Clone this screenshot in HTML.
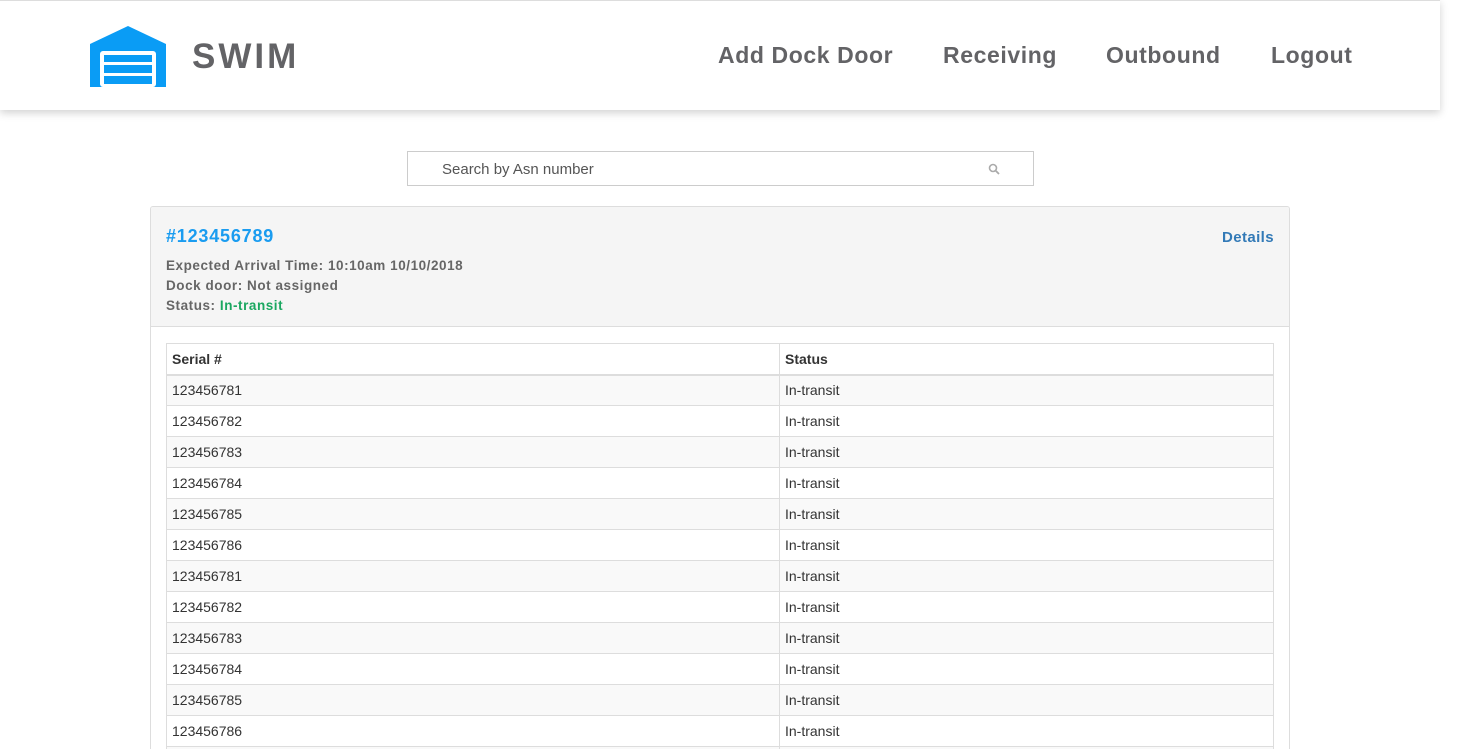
<!DOCTYPE html>
<html><head><style>
*{box-sizing:border-box;margin:0;padding:0}
html,body{width:1461px;height:749px;overflow:hidden}
body{background:#fff;font-family:"Liberation Sans",sans-serif;position:relative}
.hdr{position:absolute;left:0;top:0;width:1440px;height:110px;background:#fff;border-top:1px solid #ddd;box-shadow:0 3px 8px rgba(0,0,0,.18)}
.logo{position:absolute;left:90px;top:25px}
.brand{position:absolute;left:192px;top:36px;font-size:35px;font-weight:bold;color:#636366;letter-spacing:3px}
.nav{position:absolute;top:41px;font-size:23px;font-weight:bold;color:#636366;letter-spacing:0.6px}
.search{position:absolute;left:407px;top:151px;width:627px;height:35px;border:1px solid #ccc;font-size:15px;color:#555;padding:9px 34px}
.card{position:absolute;left:150px;top:206px;width:1140px;height:543px;border:1px solid #ddd;border-bottom:none;border-radius:3px 3px 0 0;overflow:hidden}
.ch{height:120px;background:#f5f5f5;border-bottom:1px solid #ddd;position:relative}
.asn{position:absolute;left:15px;top:19px;font-size:18px;font-weight:bold;color:#1a9cf0;letter-spacing:0.8px}
.det{position:absolute;right:15px;top:22px;font-size:15px;font-weight:bold;color:#337ab7;letter-spacing:0.4px}
.info{position:absolute;left:15px;top:49px;font-size:13.5px;font-weight:bold;color:#666;line-height:20px;letter-spacing:0.55px}
table{position:absolute;left:15px;top:136px;width:1108px;border-collapse:collapse;font-size:14px;color:#333}
td,th{border:1px solid #ddd;height:31px;padding:0 5px;text-align:left}
th{border-bottom:2px solid #ddd;font-weight:bold}
tr:nth-child(even) td{background:#f9f9f9}
td:first-child,th:first-child{width:613px}
</style></head><body>
<div class="hdr">
<svg class="logo" width="76" height="61" viewBox="0 0 76 61"><path d="M0 18 L38 0 L76 18 V61 H0Z" fill="#0a9cf5"/><rect x="10" y="25" width="56" height="36" rx="3" fill="#fff"/><rect x="14" y="29" width="48" height="7" fill="#0a9cf5"/><rect x="14" y="39" width="48" height="8" fill="#0a9cf5"/><rect x="14" y="50" width="48" height="8" fill="#0a9cf5"/></svg>
<div class="brand">SWIM</div>
<div class="nav" style="left:718px">Add Dock Door</div>
<div class="nav" style="left:943px">Receiving</div>
<div class="nav" style="left:1106px">Outbound</div>
<div class="nav" style="left:1271px">Logout</div>
</div>
<div class="search">Search by Asn number<svg style="position:absolute;right:33px;top:11px" width="12" height="12" viewBox="0 0 12 12"><circle cx="5" cy="5" r="3.5" stroke="#aaa" stroke-width="1.6" fill="none"/><path d="M7.5 7.5 L11 11" stroke="#aaa" stroke-width="1.8"/></svg></div>
<div class="card">
<div class="ch"><div class="asn">#123456789</div><div class="det">Details</div>
<div class="info">Expected Arrival Time: 10:10am 10/10/2018<br>Dock door: Not assigned<br>Status: <span style="color:#1aa760">In-transit</span></div></div>
<table>
<tr><th>Serial #</th><th>Status</th></tr>
<tr><td>123456781</td><td>In-transit</td></tr>
<tr><td>123456782</td><td>In-transit</td></tr>
<tr><td>123456783</td><td>In-transit</td></tr>
<tr><td>123456784</td><td>In-transit</td></tr>
<tr><td>123456785</td><td>In-transit</td></tr>
<tr><td>123456786</td><td>In-transit</td></tr>
<tr><td>123456781</td><td>In-transit</td></tr>
<tr><td>123456782</td><td>In-transit</td></tr>
<tr><td>123456783</td><td>In-transit</td></tr>
<tr><td>123456784</td><td>In-transit</td></tr>
<tr><td>123456785</td><td>In-transit</td></tr>
<tr><td>123456786</td><td>In-transit</td></tr>
<tr><td>123456787</td><td>In-transit</td></tr>
</table>
</div>
</body></html>
